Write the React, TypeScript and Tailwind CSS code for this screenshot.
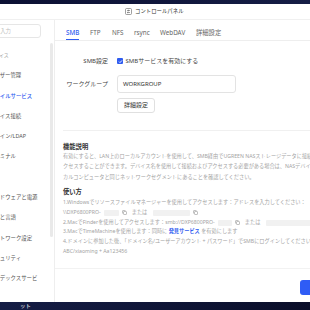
import React from "react";

const nav: { label: string; head?: boolean; active?: boolean }[] = [
  { label: "デバイス", head: true },
  { label: "ユーザー管理" },
  { label: "ファイルサービス", active: true },
  { label: "デバイス接続" },
  { label: "ドメイン/LDAP" },
  { label: "ターミナル" },
  { label: "一般", head: true },
  { label: "ハードウェアと電源" },
  { label: "時刻と言語" },
  { label: "ネットワーク設定" },
  { label: "セキュリティ" },
  { label: "インデックスサービス" },
];

// each slot holds the tab plus the space up to the next one
const tabs = [
  { t: "SMB", slot: "w-[24px]" },
  { t: "FTP", slot: "w-[22px]" },
  { t: "NFS", slot: "w-[22px]" },
  { t: "rsync", slot: "w-[26px]" },
  { t: "WebDAV", slot: "w-[36px]" },
  { t: "詳細設定", slot: "w-[30px]" },
];

const CopyIcon = () => (
  <svg width="5" height="5" viewBox="0 0 10 10" fill="none" stroke="#9a9a9a" strokeWidth="1.2">
    <rect x="3" y="3" width="6" height="6" rx="1" />
    <path d="M1 7V2a1 1 0 0 1 1-1h5" />
  </svg>
);

const Blur = ({ w }: { w: string }) => <span className={`inline-block h-[6px] rounded-[1px] bg-[#f1f1f1] ${w}`} />;

export default function App() {
  return (
    <div className="h-[310px] w-[310px] overflow-hidden bg-gradient-to-br from-[#0b1033] via-[#151d45] to-[#0a0e29] pt-[4px] font-['Noto_Sans','Noto_Sans_CJK_JP',sans-serif]">
      <div className="-ml-[20px] flex h-[298px] w-[365px] flex-col bg-white">
        {/* title bar */}
        <div className="flex h-[16px] shrink-0 items-center gap-[3px] border-b border-[#f0f0f0] pl-[145px]">
          <svg width="7" height="7" viewBox="0 0 14 14" fill="none" stroke="#777" strokeWidth="1.4">
            <rect x="1" y="1" width="12" height="12" rx="2" />
            <path d="M4 5h6M4 9h6M7 3.5v3M5.5 7.5v3" />
          </svg>
          <span className="text-[5.4px] leading-none text-[#333]">コントロールパネル</span>
        </div>

        <div className="flex min-h-0 flex-1">
          {/* sidebar */}
          <aside className="flex w-[75px] shrink-0 flex-col border-r border-[#eeeeee]">
            <div className="mt-[4px] flex h-[14px] w-[61px] items-center rounded-[3px] border border-[#e6e6e6] pl-[3px] text-[5.4px] text-[#bdbdbd]">
              名前を入力
            </div>
            <div className="mt-[6.85px] flex">
              <ul className="w-[59px] pl-[9px]">
                {nav.map((n) => (
                  <li
                    key={n.label}
                    className={
                      n.head
                        ? "h-[20.3px] py-[6.15px] text-[5px] leading-[8px] text-[#a8a8a8]"
                        : `min-h-[20.3px] py-[6.15px] text-[5.4px] leading-[8px] ${n.active ? "font-medium text-[#2f5cf0]" : "text-[#555]"}`
                    }
                  >
                    {n.label}
                  </li>
                ))}
              </ul>
              <div className="ml-[11px] w-[3px]">
                <div className="-mt-[2px] h-[194px] rounded-full bg-[#e9e9e9]" />
              </div>
            </div>
          </aside>

          {/* main */}
          <main className="flex w-[290px] flex-col overflow-hidden">
            <div className="flex h-[21px] shrink-0 border-b border-[#eeeeee] pl-[11px]">
              {tabs.map(({ t, slot }, i) => (
                <div key={t} className={`shrink-0 ${slot}`}>
                  <div
                    className={`flex h-[19.5px] w-fit items-center border-b-[1.5px] pt-[6px] text-[6.3px] ${
                      i === 0 ? "border-[#2f5cf0] font-medium text-[#2f5cf0]" : "border-transparent text-[#666]"
                    }`}
                  >
                    {t}
                  </div>
                </div>
              ))}
            </div>

            <div className="mt-[14px] flex h-[12px] items-center gap-[9px] pl-[7px] text-[6px] text-[#444]">
              <span className="w-[46px] text-right">SMB設定</span>
              <span className="flex items-center gap-[2.5px]">
                <span className="flex h-[6px] w-[6px] items-center justify-center rounded-[1px] bg-[#2f5cf0]">
                  <svg width="5" height="5" viewBox="0 0 10 10" fill="none" stroke="#fff" strokeWidth="1.8">
                    <path d="M2 5.2l2 2 4-4.4" />
                  </svg>
                </span>
                SMBサービスを有効にする
              </span>
            </div>

            <div className="mt-[8px] flex h-[18px] items-center gap-[9px] pl-[7px] text-[6px] text-[#444]">
              <span className="w-[46px] text-right">ワークグループ</span>
              <div className="flex h-[18px] w-[119px] items-center rounded-[3px] border border-[#e3e3e3] pl-[5px] text-[#333]">
                WORKGROUP
              </div>
            </div>

            <div className="mt-[5px] pl-[62px]">
              <button className="flex h-[15px] w-[38px] items-center justify-center rounded-[3px] border border-[#e0e0e0] text-[6px] text-[#333]">
                詳細設定
              </button>
            </div>

            <div className="ml-[8px] mt-[17px] border-t border-[#f0f0f0]" />

            <div className="pl-[8px] text-[5.2px] text-[#a3a3a3]">
              <h3 className="mt-[11px] text-[6.3px] font-semibold leading-[9px] text-[#333]">機能説明</h3>
              <p className="whitespace-nowrap leading-[10.3px]">
                有効にすると、LAN上のローカルアカウントを使用して、SMB経由でUGREEN NASストレージデータに接続してア
                <br />
                クセスすることができます。デバイス名を使用して接続およびアクセスする必要がある場合は、NASデバイスがロー
                <br />
                カルコンピュータと同じネットワークセグメントにあることを確認してください。
              </p>

              <h3 className="mt-[5.6px] text-[6.3px] font-semibold leading-[9px] text-[#333]">使い方</h3>
              <div className="mt-[1.25px] whitespace-nowrap leading-[9.9px]">
                <div>1.Windowsでリソースファイルマネージャーを使用してアクセスします：アドレスを入力してください：</div>
                <div className="flex items-center gap-[3px]">
                  <span>\\DXP6800PRO-</span>
                  <Blur w="w-[15px]" />
                  <CopyIcon />
                  <span className="ml-[2px]">または</span>
                  <Blur w="ml-[3px] w-[37px]" />
                  <CopyIcon />
                </div>
                <div className="flex items-center gap-[3px]">
                  <span>2.MacでFinderを使用してアクセスします：smb://DXP6800PRO-</span>
                  <Blur w="w-[14px]" />
                  <CopyIcon />
                  <span className="ml-[2px]">または</span>
                  <Blur w="ml-[3px] w-[60px]" />
                </div>
                <div>
                  3.MacでTimeMachineを使用します：同時に <span className="font-semibold text-[#2f5cf0]">発見サービス</span> を有効にします
                </div>
                <div>4.ドメインに参加した後、「ドメイン名/ユーザーアカウント + パスワード」でSMBにログインしてください。</div>
                <div>ABC/xiaoming + Aa123456</div>
              </div>
            </div>

            <div className="mt-auto flex h-[34px] shrink-0 justify-end border-t border-[#f2f2f2] pr-[11px] pt-[11px]">
              <button className="h-[15px] w-[34px] rounded-[3px] bg-[#2f5cf5] text-[6px] text-white">適用</button>
            </div>
          </main>
        </div>
      </div>
      <div className="pl-[20px] text-[5.5px] leading-[8px] text-white">ット</div>
    </div>
  );
}
